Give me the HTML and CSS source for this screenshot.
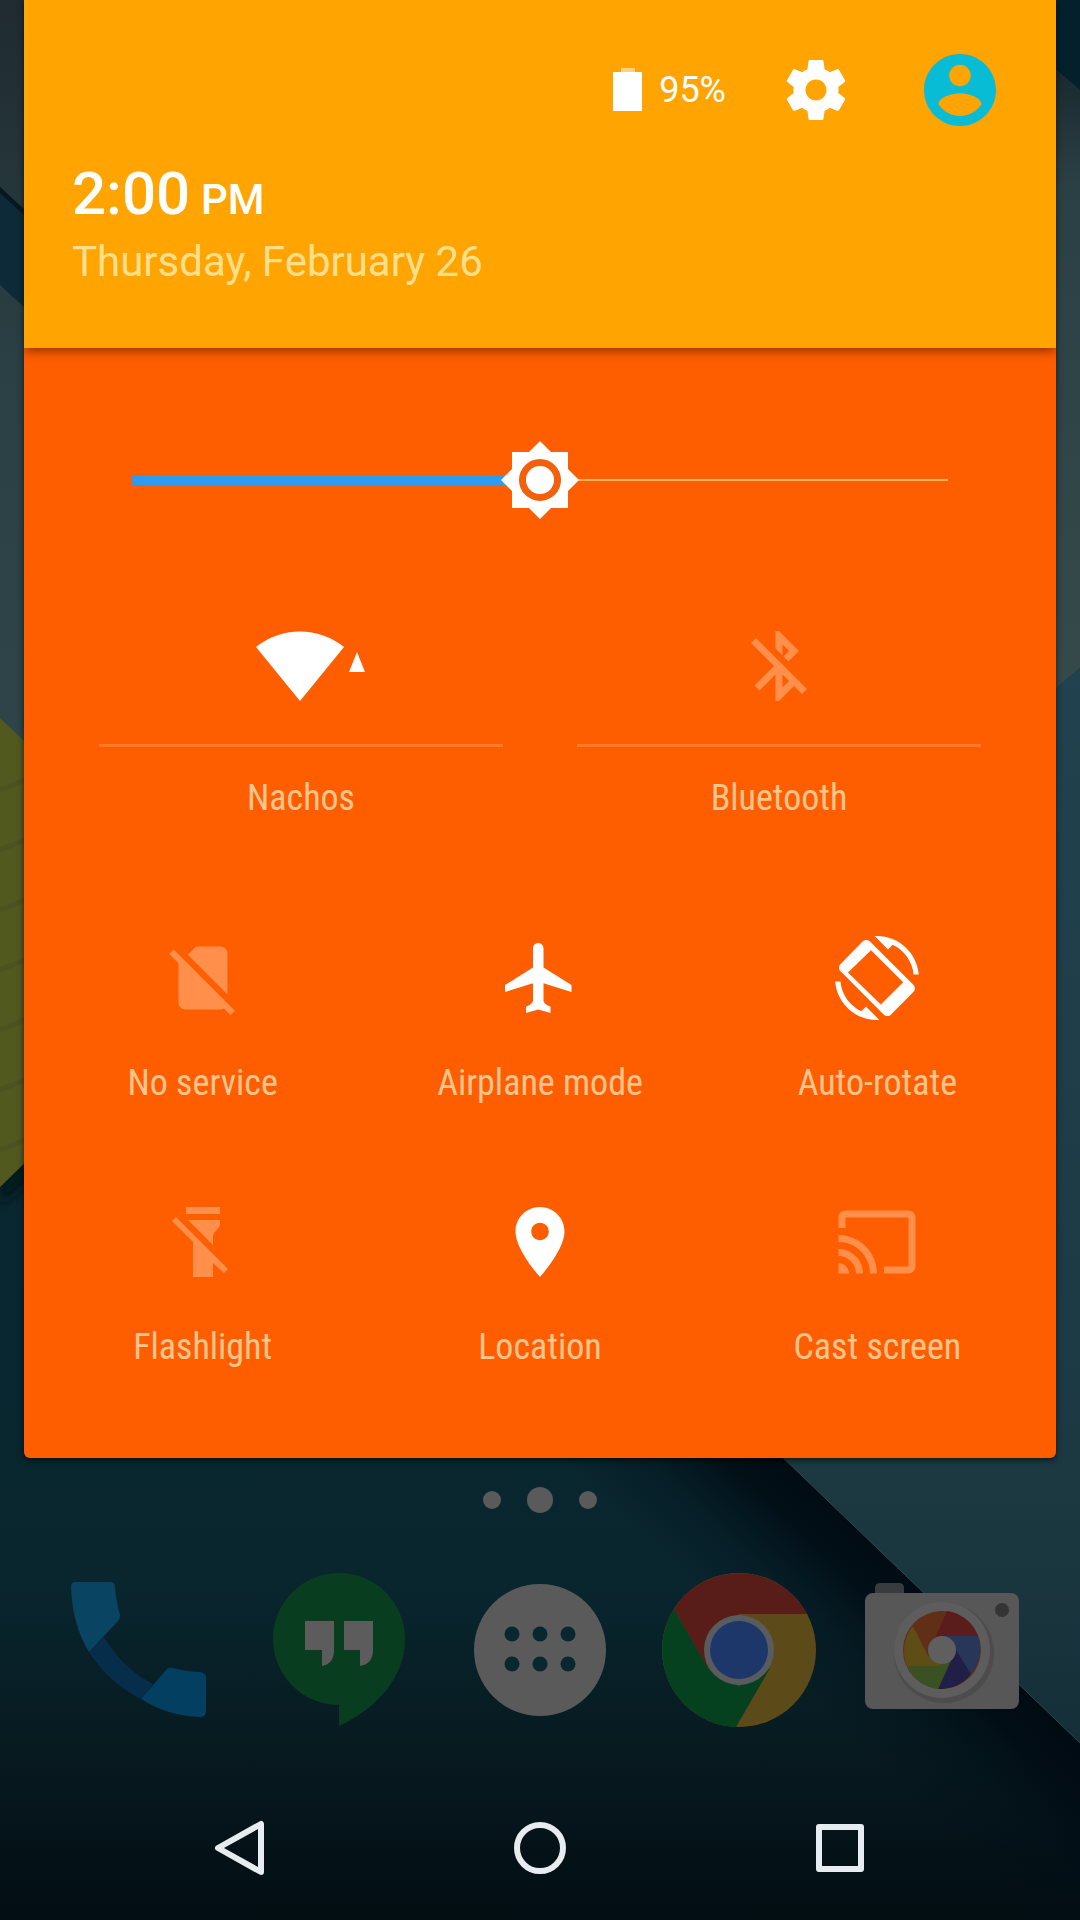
FILE: index.html
```html
<!DOCTYPE html>
<html lang="en">
<head>
<meta charset="utf-8">
<meta name="viewport" content="width=device-width, initial-scale=1">
<title>Quick settings</title>
<link rel="stylesheet" href="styles.css">
</head>
<body>
<svg class="wallpaper" viewBox="0 0 1080 1920" preserveAspectRatio="none" aria-hidden="true">
  <defs>
    <linearGradient id="base" x1="0" y1="0" x2="0" y2="1">
      <stop offset="0" stop-color="#0a2c36"/><stop offset="0.82" stop-color="#09262f"/>
      <stop offset="0.92" stop-color="#07191f"/><stop offset="1" stop-color="#020d12"/>
    </linearGradient>
    <linearGradient id="grey" x1="0" y1="0" x2="0" y2="1">
      <stop offset="0" stop-color="#1f2b30"/><stop offset="0.3" stop-color="#2b4044"/><stop offset="1" stop-color="#324a4d"/>
    </linearGradient>
    <linearGradient id="slate" x1="0" y1="0" x2="0" y2="1">
      <stop offset="0" stop-color="#18272c"/><stop offset="0.2" stop-color="#2b4045"/><stop offset="1" stop-color="#364a4a"/>
    </linearGradient>
    <linearGradient id="sheet" x1="0" y1="0" x2="0" y2="1">
      <stop offset="0" stop-color="#21424e"/><stop offset="0.75" stop-color="#1c3942"/><stop offset="1" stop-color="#152f39"/>
    </linearGradient>
    <linearGradient id="fold" gradientUnits="userSpaceOnUse" x1="920" y1="1590" x2="810" y2="1704">
      <stop offset="0" stop-color="#000a12" stop-opacity="0.95"/><stop offset="0.25" stop-color="#000a12" stop-opacity="0.8"/>
      <stop offset="0.6" stop-color="#000e16" stop-opacity="0.35"/><stop offset="1" stop-color="#000e16" stop-opacity="0"/>
    </linearGradient>
    <filter id="edge" x="-50%" y="-50%" width="200%" height="200%"><feGaussianBlur stdDeviation="6"/></filter>
  </defs>
  <rect width="1080" height="1920" fill="url(#base)"/>
  <path d="M0 0H540V1200L0 720z" fill="url(#grey)"/>
  <path d="M0 187L40 224V322L0 285z" fill="#0d2a38"/>
  <path d="M0 187L40 224V230L0 193z" fill="#061820"/>
  <path d="M0 1187L40 1148V1170L0 1205z" fill="#021419" filter="url(#edge)"/>
  <path d="M0 718L40 756V1148L0 1187z" fill="#52591f"/>
  <path d="M0 790l40-16M0 850l40-16M0 910l40-16M0 970l40-16M0 1030l40-16M0 1090l40-16M0 1150l40-16" stroke="#4c5320" stroke-width="5"/>
  <path d="M1040 0H1080V90L1040 56z" fill="#04202c"/>
  <path d="M1040 56L1080 90V668L1040 702z" fill="url(#slate)"/>
  <path d="M500 1400H724L1080 1743V1920H500z" fill="url(#fold)"/>
  <path d="M1080 668L1040 702 700 1378 1080 1743z" fill="url(#sheet)"/>
  <path d="M700 1378L1080 1743" stroke="#2c4650" stroke-width="1"/>
</svg>

<main class="panel">
  <header class="header">
    <div class="status">
      <div class="battery">
        <svg width="30" height="44" viewBox="0 0 30 44" aria-hidden="true"><path d="M8 0h14v4H8z" fill="#ffd27a"/><path d="M0 4h29v39H0z" fill="#fff"/></svg>
        <span>95%</span>
      </div>
      <button class="icon-button" aria-label="Settings">
        <svg width="72" height="72" viewBox="0 0 24 24" fill="#fff"><path d="M19.43 12.98c.04-.32.07-.64.07-.98s-.03-.66-.07-.98l2.11-1.65c.19-.15.24-.42.12-.64l-2-3.46c-.12-.22-.39-.3-.61-.22l-2.49 1c-.52-.4-1.08-.73-1.69-.98l-.38-2.65C14.46 2.18 14.25 2 14 2h-4c-.25 0-.46.18-.49.42l-.38 2.65c-.61.25-1.17.59-1.69.98l-2.49-1c-.23-.09-.49 0-.61.22l-2 3.46c-.13.22-.07.49.12.64l2.11 1.65c-.04.32-.07.65-.07.98s.03.66.07.98l-2.11 1.65c-.19.15-.24.42-.12.64l2 3.46c.12.22.39.3.61.22l2.49-1c.52.4 1.08.73 1.69.98l.38 2.65c.03.24.24.42.49.42h4c.25 0 .46-.18.49-.42l.38-2.65c.61-.25 1.17-.59 1.69-.98l2.49 1c.23.09.49 0 .61-.22l2-3.46c.12-.22.07-.49-.12-.64l-2.11-1.65zM12 15.5c-1.93 0-3.5-1.57-3.5-3.5s1.57-3.5 3.5-3.5 3.5 1.57 3.5 3.5-1.57 3.5-3.5 3.5z"/></svg>
      </button>
      <button class="icon-button" aria-label="User">
        <svg width="72" height="72" viewBox="2 2 20 20" fill="#08bcd6"><path d="M12 2C6.48 2 2 6.48 2 12s4.48 10 10 10 10-4.48 10-10S17.52 2 12 2zm0 3c1.66 0 3 1.34 3 3s-1.34 3-3 3-3-1.34-3-3 1.34-3 3-3zm0 14.200c-2.500 0-4.710-1.280-6-3.220.03-1.990 4-3.080 6-3.080 1.990 0 5.970 1.090 6 3.080-1.290 1.940-3.500 3.220-6 3.220z"/></svg>
      </button>
    </div>
    <time class="clock">2:00 <span class="meridiem">PM</span></time>
    <p class="date">Thursday, February 26</p>
  </header>

  <section class="settings">
    <input class="brightness" type="range" min="0" max="100" value="50" aria-label="Brightness">

    <div class="tiles tiles-wide">
      <button class="tile">
        <svg width="132" height="84" viewBox="0 0 132 84"><path d="M21 23A70 70 0 0 1 109 23L65 77zM122 28L130 48H114z"/></svg>
        <span class="label label-ruled">Nachos</span>
      </button>
      <button class="tile off">
        <svg width="84" height="84" viewBox="0 0 24 24"><path d="M13 5.83l1.88 1.88-1.6 1.6 1.41 1.41 3.02-3.02L12 2h-1v5.03l2 2v-3.2zM5.41 4L4 5.41 10.59 12 5 17.59 6.41 19 11 14.41V22h1l4.29-4.29 2.3 2.29L20 18.59 5.41 4zM13 18.17v-3.76l1.88 1.88L13 18.17z"/></svg>
        <span class="label label-ruled">Bluetooth</span>
      </button>
    </div>

    <div class="tiles">
      <button class="tile off">
        <svg width="84" height="84" viewBox="0 0 24 24"><path d="M18.99 5c0-1.100-.89-2-1.990-2h-7L7.660 5.340 19 16.680 18.990 5zM3.650 3.880L2.380 5.150 5 7.770V19c0 1.100.9 2 2 2h10.010c.35 0 .67-.1.96-.26l1.880 1.880 1.270-1.270L3.650 3.880z"/></svg>
        <span class="label">No service</span>
      </button>
      <button class="tile">
        <svg width="84" height="84" viewBox="0 0 24 24"><path d="M21 16v-2l-8-5V3.500c0-.83-.67-1.500-1.500-1.500S10 2.670 10 3.500V9l-8 5v2l8-2.500V18.500c-.2.900-1 1.200-2 1.700V22l3.500-1 3.500 1v-1.800c-1-.5-1.800-.8-2-1.700v-5l8 2.500z"/></svg>
        <span class="label">Airplane mode</span>
      </button>
      <button class="tile">
        <svg width="84" height="84" viewBox="0 0 24 24"><path fill-rule="evenodd" d="M16.480 2.520c3.270 1.550 5.610 4.720 5.970 8.480h1.500C23.440 4.840 18.290 0 12 0l-.66.03 3.810 3.810 1.330-1.320zM10 1.600c-.59-.59-1.540-.59-2.120 0L1.600 7.980c-.59.59-.59 1.540 0 2.120l12.300 12.300c.59.59 1.540.59 2.120 0l6.380-6.380c.59-.59.59-1.540 0-2.120L10 1.600zM13.100 19.600L3.700 10.400 10.300 4.100 19.500 13.200zM7.520 21.480C4.250 19.940 1.910 16.760 1.550 13H.05C.56 19.160 5.710 24 12 24l.66-.03-3.810-3.810-1.330 1.320z"/></svg>
        <span class="label">Auto-rotate</span>
      </button>
      <button class="tile off">
        <svg width="84" height="84" viewBox="0 0 84 84"><path d="M25 7H59V14H25zM27 20H59V24C59 29 52 31 52 37V45zM15 17L11 21 32 42V77H52V63L63 73 67 69z"/></svg>
        <span class="label">Flashlight</span>
      </button>
      <button class="tile">
        <svg width="84" height="84" viewBox="0 0 24 24"><path d="M12 2C8.130 2 5 5.130 5 9c0 5.250 7 13 7 13s7-7.750 7-13c0-3.870-3.130-7-7-7zm0 9.500c-1.380 0-2.500-1.120-2.500-2.500s1.120-2.500 2.500-2.500 2.500 1.120 2.500 2.500-1.120 2.500-2.500 2.500z"/></svg>
        <span class="label">Location</span>
      </button>
      <button class="tile off">
        <svg width="84" height="84" viewBox="0 0 24 24"><path d="M21 3H3c-1.100 0-2 .9-2 2v3h2V5h18v14h-7v2h7c1.100 0 2-.9 2-2V5c0-1.100-.9-2-2-2zM1 18v3h3c0-1.660-1.340-3-3-3zm0-4v2c2.760 0 5 2.240 5 5h2c0-3.870-3.130-7-7-7zm0-4v2c4.970 0 9 4.030 9 9h2c0-6.080-4.930-11-11-11z"/></svg>
        <span class="label">Cast screen</span>
      </button>
    </div>
  </section>
</main>

<div class="pages" aria-hidden="true"><i class="dot"></i><i class="dot current"></i><i class="dot"></i></div>

<nav class="dock" aria-label="Favourite apps">
  <button class="icon-button" aria-label="Phone">
    <svg width="160" height="160" viewBox="58 1570 160 160">
      <path d="M104 1637Q122 1668 153 1684L141 1699Q108 1682 89 1652z" fill="#062e4a"/>
      <path d="M75 1582H110Q115 1582 115 1587Q116 1602 120 1615Q120 1619 118 1621L89 1652Q72 1624 71 1587Q71 1582 75 1582z" fill="#0a4463"/>
      <path d="M167 1669Q169 1667 173 1668 188 1672 200 1672 206 1673 206 1677V1711Q206 1717 200 1717 168 1716 141 1699z" fill="#033f61"/>
    </svg>
  </button>
  <button class="icon-button" aria-label="Hangouts">
    <svg width="160" height="160" viewBox="259 1570 160 160">
      <circle cx="339" cy="1639" r="66" fill="#083d20"/>
      <path d="M405 1639C405 1676 378 1708 339 1726V1639z" fill="#083d20"/>
      <path d="M305 1621H334V1650Q334 1664 322 1666V1650H305zM344 1621H373V1650Q373 1664 360 1666V1650H344z" fill="#5c5c5c"/>
    </svg>
  </button>
  <button class="icon-button" aria-label="All apps">
    <svg width="160" height="160" viewBox="460 1570 160 160">
      <circle cx="540" cy="1650" r="66" fill="#5a5a5a"/>
      <g fill="#08272f"><circle cx="512" cy="1634" r="7.500"/><circle cx="540" cy="1634" r="7.500"/><circle cx="568" cy="1634" r="7.500"/><circle cx="512" cy="1664" r="7.500"/><circle cx="540" cy="1664" r="7.500"/><circle cx="568" cy="1664" r="7.500"/></g>
    </svg>
  </button>
  <button class="icon-button" aria-label="Chrome">
    <svg width="160" height="160" viewBox="-78 -80 160 160">
      <circle r="77" fill="#5c4b19"/>
      <path d="M-65 -41A77 77 0 0 1 68 -36H0L-31 18z" fill="#581d19"/>
      <path d="M-65 -41A77 77 0 0 0 -3 77L31 18 0 36 -31 18z" fill="#05401f"/>
      <circle r="35" fill="#595b5f"/><circle r="29" fill="#1e376b"/>
    </svg>
  </button>
  <button class="icon-button" aria-label="Camera">
    <svg width="160" height="160" viewBox="-80 -80 160 160">
      <path d="M-67 -50V-62Q-67 -67 -62 -67H-43Q-38 -67 -38 -62V-50z" fill="#393b3d"/>
      <rect x="-77" y="-57" width="154" height="116" rx="8" fill="#575757"/>
      <circle cx="60" cy="-40" r="7" fill="#343434"/>
      <circle cx="2" cy="3" r="50" fill="#4c4c4c"/>
      <circle r="48" fill="#5d5d5d"/>
      <circle r="39" fill="#612e18"/>
      <path d="M5 -39A39 39 0 0 1 36 -14L0 -14 -7 -12z" fill="#5b1d1b"/>
      <path d="M36 -14A39 39 0 0 1 29 24L0 0V-14z" fill="#28365a"/>
      <path d="M29 24A39 39 0 0 1 -4 39L14 0z" fill="#201f47"/>
      <path d="M-4 39A39 39 0 0 1 -35 16L0 0 10 8z" fill="#3a5222"/>
      <path d="M-35 16A39 39 0 0 1 -29 -24L-14 6 0 16z" fill="#5e4e16"/>
      <circle r="14" fill="#5f5f5f"/>
    </svg>
  </button>
</nav>

<nav class="navbar" aria-label="System">
  <button class="icon-button" aria-label="Back"><svg width="60" height="60" viewBox="0 0 60 60"><path d="M8 30L51 6V54z"/></svg></button>
  <button class="icon-button" aria-label="Home"><svg width="60" height="60" viewBox="0 0 60 60"><circle cx="30" cy="30" r="23"/></svg></button>
  <button class="icon-button" aria-label="Recents"><svg width="60" height="60" viewBox="0 0 60 60"><rect x="9" y="9" width="42" height="42"/></svg></button>
</nav>
</body>
</html>
```
FILE: styles.css
```css
* {
  box-sizing: border-box;
}

body {
  position: relative;
  isolation: isolate;
  display: flex;
  flex-direction: column;
  min-height: 100vh;
  margin: 0;
  background: #020d12;
  color: #fff;
  font-family: Roboto, "Liberation Sans", sans-serif;
}

button {
  margin: 0;
  padding: 0;
  border: 0;
  background: none;
  color: inherit;
  font: inherit;
  cursor: pointer;
}

svg {
  display: block;
}

.wallpaper {
  position: absolute;
  inset: 0;
  z-index: -1;
  width: 100%;
  height: 100%;
}

/* Shade */
.panel {
  margin: 0 24px;
  border-radius: 0 0 6px 6px;
  background: #ff5e00;
  box-shadow: 0 2px 6px rgba(0, 0, 0, 0.6);
}

.header {
  position: relative;
  padding: 54px 60px 61px 48px;
  background: #ffa400;
  box-shadow: 0 3px 10px rgba(100, 30, 0, 0.7);
  clip-path: inset(0 0 -16px 0);
}

.status {
  display: flex;
  align-items: center;
  justify-content: flex-end;
  gap: 72px;
}

.battery {
  display: flex;
  align-items: center;
  gap: 16px;
  margin-right: -18px;
  font-size: 36px;
  line-height: 44px;
}

.clock {
  display: block;
  margin-top: 32px;
  font-size: 60px;
  font-weight: 500;
  line-height: 72px;
}

.meridiem {
  margin-left: -4px;
  font-size: 42px;
  line-height: 50px;
}

.date {
  margin: 7px 0 0;
  color: #ffdf8c;
  font-size: 42px;
  line-height: 50px;
}

.settings {
  padding: 93px 10px 89px;
}

/* Brightness slider */
.brightness {
  display: block;
  width: calc(100% - 196px);
  height: 78px;
  margin: 0 auto 105px;
  appearance: none;
  background: none;
}

.brightness::-webkit-slider-runnable-track {
  height: 10px;
  background:
    linear-gradient(#2b9cf0, #2b9cf0) left center / 50% 10px no-repeat,
    linear-gradient(#ffb45a, #ffb45a) center / 100% 2px no-repeat;
}

.brightness::-webkit-slider-thumb {
  width: 78px;
  height: 78px;
  margin-top: -34px;
  border: 0;
  appearance: none;
  background: url("data:image/svg+xml,%3Csvg xmlns='http://www.w3.org/2000/svg' viewBox='0 0 78 78'%3E%3Cpath d='M39 0L50 11H67V28L78 39 67 50V67H50L39 78 28 67H11V50L0 39 11 28V11H28z' fill='white'/%3E%3Ccircle cx='39' cy='39' r='17.5' fill='none' stroke='%23f2600c' stroke-width='7'/%3E%3C/svg%3E") center / 100% no-repeat;
}

/* Tiles */
.tiles {
  display: grid;
  grid-template-columns: repeat(3, 1fr);
  row-gap: 95px;
}

.tiles-wide {
  grid-template-columns: repeat(2, 1fr);
  margin: 0 28px 116px;
}

.tile {
  display: flex;
  flex-direction: column;
  align-items: center;
  fill: #fff;
}

.tile.off {
  fill: #ff8f4a;
}

.label {
  margin-top: 41px;
  color: #ffc58e;
  font-family: "Roboto Condensed", Roboto, "Liberation Sans Narrow", sans-serif;
  font-size: 36px;
  line-height: 44px;
}

.label-ruled {
  width: calc(100% - 74px);
  margin-top: 36px;
  padding-top: 29px;
  border-top: 3px solid #ff7a29;
}

/* Launcher */
.pages {
  display: flex;
  align-items: center;
  justify-content: center;
  gap: 26px;
  height: 28px;
  margin-top: 28px;
}

.dot {
  width: 18px;
  height: 18px;
  border-radius: 50%;
  background: #5a5a5a;
}

.dot.current {
  width: 26px;
  height: 26px;
}

.dock {
  display: grid;
  grid-template-columns: repeat(5, 1fr);
  justify-items: center;
  margin-top: 56px;
  padding: 0 38px;
}

.navbar {
  display: grid;
  grid-template-columns: repeat(3, 1fr);
  justify-items: center;
  margin-top: 88px;
  padding: 0 90px 42px;
  fill: none;
  stroke: #e6ecef;
  stroke-width: 6;
  stroke-linejoin: round;
}
```
